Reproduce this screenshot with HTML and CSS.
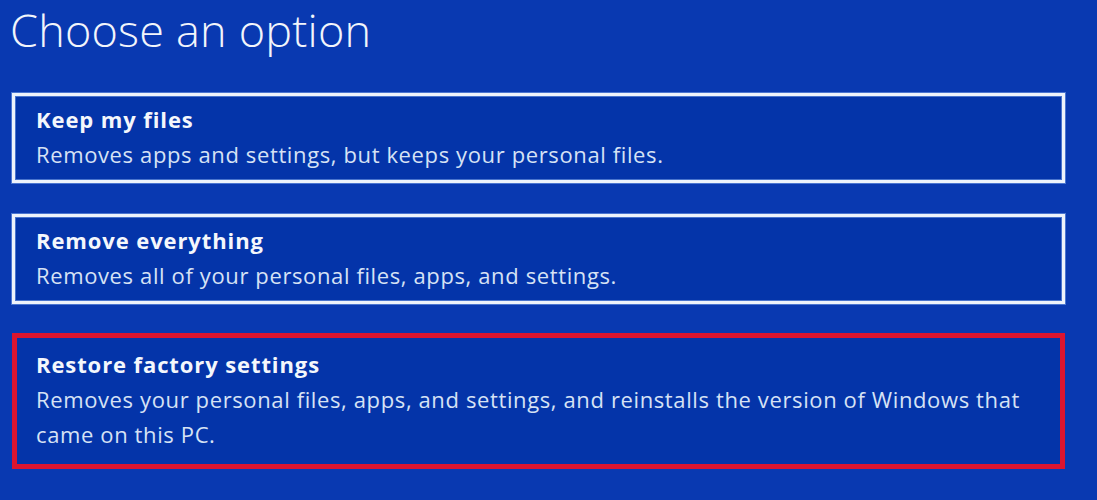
FILE: index.html
```html
<!DOCTYPE html>
<html lang="en">
<head>
<meta charset="utf-8">
<title>Choose an option</title>
<link rel="stylesheet" href="styles.css">
</head>
<body>
<main class="screen">
  <h1 class="title">Choose an option</h1>
  <ul class="options">
    <li class="option">
      <div class="option-name">Keep my files</div>
      <div class="option-desc">Removes apps and settings, but keeps your personal files.</div>
    </li>
    <li class="option">
      <div class="option-name">Remove everything</div>
      <div class="option-desc">Removes all of your personal files, apps, and settings.</div>
    </li>
    <li class="option option-selected">
      <div class="option-name">Restore factory settings</div>
      <div class="option-desc">Removes your personal files, apps, and settings, and reinstalls the version of Windows that came on this PC.</div>
    </li>
  </ul>
</main>
</body>
</html>
```

FILE: styles.css
```css
html, body {
  margin: 0;
  padding: 0;
  background: #0939b1;
  height: 100%;
}

.screen {
  padding: 6px 32px 0 10px;
  font-family: "Open Sans", "Noto Sans", "DejaVu Sans", sans-serif;
  color: #dfe8f7;
}

.title {
  margin: 0 0 39px 0;
  font-size: 45px;
  line-height: 48px;
  font-weight: 300;
  letter-spacing: 0.2px;
  color: #f2f5fb;
}

.options {
  list-style: none;
  margin: 0;
  padding: 0 0 0 2px;
  display: flex;
  flex-direction: column;
  gap: 31px;
}

.option {
  border: 3px solid #eef3fb;
  box-shadow: 0 0 0 1px rgba(120, 160, 230, 0.6), inset 0 0 0 1px rgba(120, 160, 230, 0.6);
  background: #0434a9;
  padding: 6px 21px 8px 21px;
  line-height: 35px;
}

.option-name {
  font-size: 22px;
  font-weight: 700;
  letter-spacing: 0.9px;
  color: #f4f7fc;
}

.option-desc {
  font-size: 22px;
  letter-spacing: 0.62px;
  color: #d6e2f5;
}

.option-selected {
  margin-top: -2px;
  border: 5px solid #db1530;
  box-shadow: none;
  padding: 9px 19px 12px 19px;
}
```
